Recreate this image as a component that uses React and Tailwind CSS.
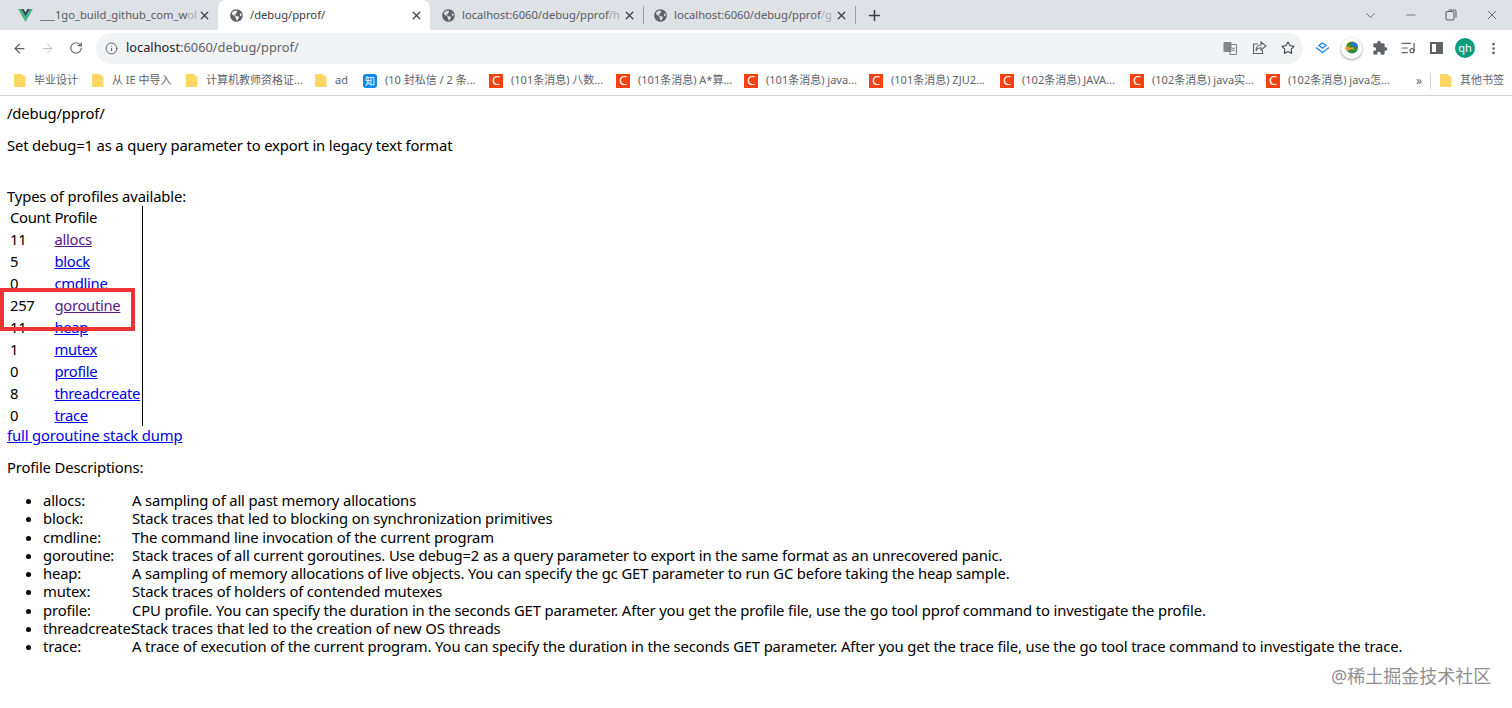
import React from "react";
import { ArrowLeft, ArrowRight, RotateCw, Info, Star, X, Plus, Minus, ChevronDown, ListMusic, MoreVertical } from "lucide-react";
import { FaGlobeAmericas } from "react-icons/fa";
import { MdExtension } from "react-icons/md";

const bookmarks = [
  { kind: "folder", text: "毕业设计", w: 78 },
  { kind: "folder", text: "从 IE 中导入", w: 94 },
  { kind: "folder", text: "计算机教师资格证...", w: 129 },
  { kind: "folder", text: "ad", w: 48 },
  { kind: "zhi", text: "(10 封私信 / 2 条...", w: 126 },
  { kind: "c", text: "(101条消息) 八数...", w: 127 },
  { kind: "c", text: "(101条消息) A*算...", w: 128 },
  { kind: "c", text: "(101条消息) java...", w: 125 },
  { kind: "c", text: "(101条消息) ZJU2...", w: 131 },
  { kind: "c", text: "(102条消息) JAVA...", w: 130 },
  { kind: "c", text: "(102条消息) java实...", w: 136 },
  { kind: "c", text: "(102条消息) java怎...", w: 148 },
];

const profiles = [
  ["11", "allocs", true],
  ["5", "block", false],
  ["0", "cmdline", false],
  ["257", "goroutine", true],
  ["11", "heap", false],
  ["1", "mutex", false],
  ["0", "profile", false],
  ["8", "threadcreate", false],
  ["0", "trace", false],
];

const descriptions = [
  ["allocs:", "A sampling of all past memory allocations"],
  ["block:", "Stack traces that led to blocking on synchronization primitives"],
  ["cmdline:", "The command line invocation of the current program"],
  ["goroutine:", "Stack traces of all current goroutines. Use debug=2 as a query parameter to export in the same format as an unrecovered panic."],
  ["heap:", "A sampling of memory allocations of live objects. You can specify the gc GET parameter to run GC before taking the heap sample."],
  ["mutex:", "Stack traces of holders of contended mutexes"],
  ["profile:", "CPU profile. You can specify the duration in the seconds GET parameter. After you get the profile file, use the go tool pprof command to investigate the profile."],
  ["threadcreate:", "Stack traces that led to the creation of new OS threads"],
  ["trace:", "A trace of execution of the current program. You can specify the duration in the seconds GET parameter. After you get the trace file, use the go tool trace command to investigate the trace."],
];

function Folder() {
  return (
    <svg width="12" height="13" viewBox="0 0 12 13" className="shrink-0">
      <path d="M1 0h6.5L11.500 3v9a1 1 0 0 1-1 1H1a1 1 0 0 1-1-1V1a1 1 0 0 1 1-1z" fill="#fdd663" />
    </svg>
  );
}

function BookmarkIcon({ kind }) {
  if (kind === "folder") return <Folder />;
  if (kind === "zhi") {
    return (
      <span className="flex h-[14px] w-[14px] shrink-0 items-center justify-center rounded-[3px] bg-[#0f88eb] text-[10px] leading-none text-white">
        知
      </span>
    );
  }
  return (
    <span className="flex h-[14px] w-[14px] shrink-0 items-center justify-center bg-[#f5400f] text-[13px] leading-none text-white">
      C
    </span>
  );
}

function Tab({ title, active, icon, w, pl }) {
  return (
    <div
      className={`flex h-[30px] shrink-0 items-center pr-[7px] ${w} ${pl} ${
        active ? "rounded-t-lg bg-white text-[#3c4043]" : "text-[#5a5e63]"
      }`}
    >
      {icon === "vue" ? (
        <svg width="15" height="13" viewBox="0 0 16 14" className="shrink-0">
          <path d="M0 0h3.200L8 8.200 12.800 0H16L8 14z" fill="#41b883" />
          <path d="M3.200 0h2.700L8 3.600 10.100 0h2.700L8 8.200z" fill="#35495e" />
        </svg>
      ) : (
        <FaGlobeAmericas className="shrink-0 text-[13px] text-[#5f6368]" />
      )}
      <span className="ml-[7px] min-w-0 flex-1 whitespace-nowrap text-[11.200px]">
        {title.slice(0, -2)}
        {!active && <span className="text-[#a9adb2]">{title.slice(-2)}</span>}
        {active && title.slice(-2)}
      </span>
      <X size={13} strokeWidth={2.4} className="ml-[4px] shrink-0 text-[#3c4043]" />
    </div>
  );
}

function TabDivider() {
  return <div className="h-[18px] w-px shrink-0 bg-[#9aa0a6]" />;
}

export default function App() {
  return (
    <div className="relative h-[708px] w-[1512px] overflow-hidden bg-white font-['Noto_Sans','Noto_Sans_CJK_SC',sans-serif] text-black">
      {/* browser chrome */}
      <div className="flex h-[30px] items-center bg-[#dee1e6] pl-[12px]">
        <Tab title="___1go_build_github_com_wol" icon="vue" w="w-[206px]" pl="pl-[6px]" />
        <Tab title="/debug/pprof/" active w="w-[212px]" pl="pl-[12px]" />
        <Tab title="localhost:6060/debug/pprof/h" w="w-[213px]" pl="pl-[12px]" />
        <TabDivider />
        <Tab title="localhost:6060/debug/pprof/g" w="w-[211px]" pl="pl-[10px]" />
        <TabDivider />
        <Plus size={17} strokeWidth={2.2} className="ml-[10px] text-[#3c4043]" />
        <div className="ml-auto flex items-center pr-[12px] text-[#5f6368]">
          <ChevronDown size={15} strokeWidth={1.4} />
          <Minus size={14} strokeWidth={1.4} className="ml-[26px]" />
          <svg width="12" height="12" viewBox="0 0 12 12" fill="none" stroke="#5f6368" strokeWidth="1.100" className="ml-[27px]">
            <rect x="1" y="2.500" width="8" height="8.500" rx="1.500" />
            <path d="M3.500 1h6a1.500 1.500 0 0 1 1.500 1.500v6" />
          </svg>
          <X size={16} strokeWidth={1.4} className="ml-[27px]" />
        </div>
      </div>

      <div className="flex h-[36px] items-center bg-white">
        <ArrowLeft size={15} strokeWidth={2} className="ml-[12px] text-[#5f6368]" />
        <ArrowRight size={15} strokeWidth={1.600} className="ml-[13px] text-[#bcc0c4]" />
        <RotateCw size={14} strokeWidth={2} className="ml-[14px] text-[#5f6368]" />
        <div className="ml-[13px] flex h-[31px] w-[1207px] items-center rounded-full bg-[#f1f3f4] pl-[9px] pr-[8px]">
          <Info size={13} strokeWidth={1.800} className="text-[#5f6368]" />
          <span className="ml-[8px] text-[12.800px] text-[#202124]">
            localhost<span className="text-[#5f6368]">:6060/debug/pprof/</span>
          </span>
          <div className="ml-auto flex items-center text-[#5f6368]">
            <svg width="14" height="14" viewBox="0 0 14 14">
              <rect x="0.500" y="1" width="8" height="10" rx="1" fill="#80868b" />
              <path d="M6 3.500h7.500v10H7z" fill="none" stroke="#80868b" />
              <path d="M9 6.500l3 4M12 6.500l-3 4" stroke="#80868b" />
            </svg>
            <svg width="15" height="14" viewBox="0 0 15 14" fill="none" stroke="#5f6368" strokeWidth="1.100" className="ml-[15px]">
              <path d="M6 3H1.500v9.500h9V9" />
              <path d="M9 1l5 4-5 4V6.800C6.500 6.800 5 7.800 4 10c0-3.500 1.800-6 5-6z" />
            </svg>
            <Star size={14} strokeWidth={1.800} className="ml-[14px] text-[#3c4043]" />
          </div>
        </div>
        <svg width="15" height="12" viewBox="0 0 15 12" fill="none" stroke="#2b8fe8" strokeWidth="1.500" className="ml-[12px]">
          <path d="M7.500 1L11 3.500 7.500 6 4 3.500z" />
          <path d="M1 5.500l6.500 5 6.500-5" />
        </svg>
        <div className="ml-[11px] flex h-[21px] w-[21px] items-center justify-center rounded-full bg-white shadow-[0_1px_3px_rgba(0,0,0,0.4)]">
          <svg width="15" height="14" viewBox="0 0 15 14">
            <circle cx="8" cy="6.500" r="6" fill="#2e8b3a" />
            <path d="M8 1a6 6 0 0 1 6 5H9z" fill="#2a6fd6" />
            <path d="M0 7l5-2v1.500h5v2H5V10z" fill="#f0a020" />
          </svg>
        </div>
        <MdExtension size={16} className="ml-[10px] text-[#5f6368]" />
        <ListMusic size={16} strokeWidth={1.800} className="ml-[12px] text-[#5f6368]" />
        <div className="ml-[14px] flex h-[12px] w-[13px] justify-end border-2 border-[#5f6368]">
          <div className="h-full w-[5px] bg-[#5f6368]" />
        </div>
        <div className="ml-[12px] flex h-[20px] w-[20px] items-center justify-center rounded-full bg-[#0d9b7c] text-[11px] text-white">
          qh
        </div>
        <MoreVertical size={15} strokeWidth={2.2} className="ml-[11px] text-[#5f6368]" />
      </div>

      <div className="flex h-[30px] items-center border-b border-[#d0d2d5] bg-white pl-[14px] text-[11px] whitespace-nowrap text-[#5f6368]">
        {bookmarks.map((b) => (
          <div key={b.text} className="flex shrink-0 items-center" style={{ width: b.w }}>
            <BookmarkIcon kind={b.kind} />
            <span className="ml-[8px]">{b.text}</span>
          </div>
        ))}
        <span className="ml-[2px] text-[12px]">»</span>
        <div className="ml-[8px] h-[16px] w-px bg-[#d0d2d5]" />
        <div className="ml-[9px] flex items-center">
          <Folder />
          <span className="ml-[8px]">其他书签</span>
        </div>
      </div>

      {/* page */}
      <div className="pl-[7px] text-[14.800px] leading-[18px] tracking-[-0.14px]">
        <p className="mt-[8px]">/debug/pprof/</p>
        <p className="mt-[14px]">Set debug=1 as a query parameter to export in legacy text format</p>
        <p className="mt-[33px]">Types of profiles available:</p>
        <table className="mt-[1px] border-collapse tracking-[-0.3px]">
          <thead>
            <tr className="h-[22px]">
              <th className="pl-[3px] pr-[4px] text-left font-normal">Count</th>
              <th className="border-r border-black pr-[2px] text-left font-normal">Profile</th>
            </tr>
          </thead>
          <tbody>
            {profiles.map(([count, name, visited]) => (
              <tr key={name} className="h-[22px]">
                <td className="pl-[3px]">{count}</td>
                <td className="border-r border-black pr-[2px]">
                  <a href="#" className={`underline ${visited ? "text-[#551a8b]" : "text-[#0000ee]"}`}>
                    {name}
                  </a>
                </td>
              </tr>
            ))}
          </tbody>
        </table>
        <a href="#" className="block text-[#0000ee] underline">
          full goroutine stack dump
        </a>
        <p className="mt-[14px]">Profile Descriptions:</p>
        <ul className="mt-[15px] list-disc pl-[36px]">
          {descriptions.map(([name, text]) => (
            <li key={name} className="h-[18.250px] leading-[18.250px]">
              <div className="flex whitespace-nowrap">
                <span className="w-[89px] shrink-0">{name}</span>
                <span>{text}</span>
              </div>
            </li>
          ))}
        </ul>
      </div>

      {/* red annotation box */}
      <div className="absolute top-[288px] left-0 h-[43px] w-[135px] border-[4px] border-[#ee3338]" />
      {/* watermark */}
      <div className="absolute top-[665px] left-[1331px] text-[18px] leading-[22px] whitespace-nowrap text-[#8f8f8f]">
        @稀土掘金技术社区
      </div>
    </div>
  );
}
